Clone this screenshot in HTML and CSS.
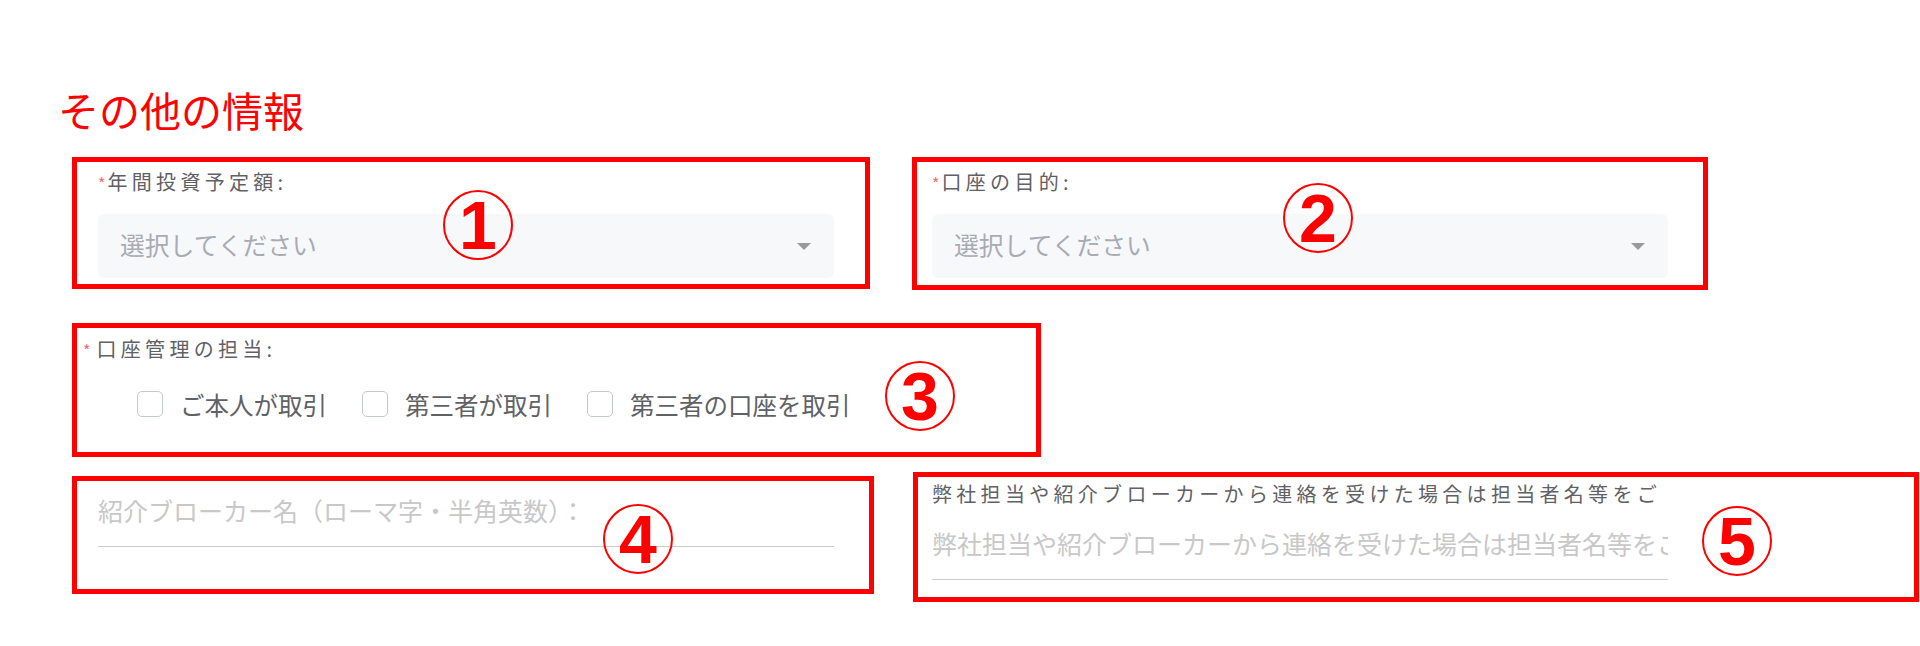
FILE: index.html
```html
<!DOCTYPE html>
<html lang="ja">
<head>
  <meta charset="UTF-8" />
  <title>その他の情報</title>
  <link rel="stylesheet" href="styles.css">
</head>
<body>
  <div class="page">
    <h2 class="section-title">その他の情報</h2>

    <div class="form">
      <!-- 年間投資予定額 -->
      <div class="item">
        <div class="label"><span class="req">*</span>年間投資予定額:</div>
        <div class="select">
          <span class="select-text">選択してください</span>
          <span class="arrow"></span>
        </div>
      </div>

      <!-- 口座の目的 -->
      <div class="item">
        <div class="label"><span class="req">*</span>口座の目的:</div>
        <div class="select">
          <span class="select-text">選択してください</span>
          <span class="arrow"></span>
        </div>
      </div>

      <!-- 口座管理の担当 -->
      <div class="item item-wide">
        <div class="label label-hang"><span class="req req-space">*</span>口座管理の担当:</div>
        <div class="checks">
          <label class="check"><span class="check-box"></span>ご本人が取引</label>
          <label class="check"><span class="check-box"></span>第三者が取引</label>
          <label class="check"><span class="check-box"></span>第三者の口座を取引</label>
        </div>
      </div>

      <!-- 紹介ブローカー名 -->
      <div class="item">
        <div class="line-input line-input-top">
          <span class="input-placeholder">紹介ブローカー名（ローマ字・半角英数）：</span>
        </div>
      </div>

      <!-- 担当者名 -->
      <div class="item">
        <div class="label label-clip">弊社担当や紹介ブローカーから連絡を受けた場合は担当者名等をご記入ください</div>
        <div class="line-input line-input-label">
          <span class="input-placeholder">弊社担当や紹介ブローカーから連絡を受けた場合は担当者名等をご記入ください</span>
        </div>
      </div>
    </div>
  </div>

  <!-- 注釈（赤枠と番号） -->
  <div class="marks">
    <div class="mark-box box-1"></div>
    <div class="mark-box box-2"></div>
    <div class="mark-box box-3"></div>
    <div class="mark-box box-4"></div>
    <div class="mark-box box-5"></div>
    <div class="mark-num num-1">1</div>
    <div class="mark-num num-2">2</div>
    <div class="mark-num num-3">3</div>
    <div class="mark-num num-4">4</div>
    <div class="mark-num num-5">5</div>
  </div>
</body>
</html>
```

FILE: styles.css
```css
/* ページ全体 */
body {
  margin: 0;
  background: #fff;
  font-family: "Noto Sans CJK JP", "Noto Sans", sans-serif;
  position: relative;
  width: 1920px;
  height: 646px;
  overflow: hidden;
}

.page {
  padding: 85px 0 0 58px;
}

.section-title {
  margin: 0 0 39px;
  font-size: 41px;
  line-height: 48px;
  font-weight: 400;
  color: #ff0000;
}

/* フォーム */
.form {
  margin-left: 40px;
  display: grid;
  grid-template-columns: 736px 736px;
  column-gap: 98px;
  row-gap: 61px;
}

.item-wide {
  grid-column: 1 / -1;
}

.label {
  margin-top: -2px;
  font-size: 20px;
  line-height: 24px;
  letter-spacing: 4.3px;
  color: #5f6165;
  white-space: nowrap;
}

.label-hang {
  margin-left: -15px;
}

.label-clip {
  width: 726px;
  overflow: hidden;
}

.req {
  color: #f56c6c;
  font-size: 16px;
  letter-spacing: 0;
  margin-right: 2px;
}

.req-space {
  margin-right: 6px;
}

.select {
  margin-top: 19px;
  height: 64px;
  background: #f7f8fa;
  border-radius: 6px;
  padding: 0 23px 0 22px;
  display: flex;
  align-items: center;
  justify-content: space-between;
  box-sizing: border-box;
}

.select-text {
  margin-bottom: 4px;
  font-size: 24.8px;
  color: #a8abb2;
}

.arrow {
  width: 0;
  height: 0;
  border-left: 7px solid transparent;
  border-right: 7px solid transparent;
  border-top: 7px solid #9a9a9a;
}

/* チェックボックス */
.checks {
  margin: 23px 0 0 39px;
  display: flex;
  gap: 35px;
  height: 38px;
  align-items: center;
}

.check {
  display: flex;
  align-items: center;
  gap: 17px;
  font-size: 24.5px;
  color: #5f6165;
}

.check-box {
  width: 26px;
  height: 26px;
  border: 1px solid #c4c8d0;
  border-radius: 5px;
  box-sizing: border-box;
}

/* 下線入力 */
.line-input {
  padding: 23px 0 21px;
  border-bottom: 1px solid #cccccc;
  line-height: 24px;
  overflow: hidden;
  white-space: nowrap;
}

.line-input-top {
  padding-top: 14px;
  padding-bottom: 20px;
}

.line-input-label {
  padding-top: 25px;
  padding-bottom: 20px;
}

.input-placeholder {
  font-size: 25px;
  color: #c8c8c8;
}

/* 注釈 */
.marks {
  position: absolute;
  inset: 0;
  pointer-events: none;
}

.mark-box {
  position: absolute;
  border: 5px solid #ff0000;
  box-sizing: border-box;
}

.box-1 { left: 72px; top: 157px; width: 798px; height: 132px; }
.box-2 { left: 912px; top: 157px; width: 796px; height: 133px; }
.box-3 { left: 72px; top: 323px; width: 969px; height: 134px; }
.box-4 { left: 72px; top: 476px; width: 802px; height: 118px; }
.box-5 { left: 913px; top: 472px; width: 1006px; height: 130px; }

.mark-num {
  position: absolute;
  width: 70px;
  height: 70px;
  margin: -35px 0 0 -35px;
  border: 2.5px solid #ff0000;
  border-radius: 50%;
  box-sizing: border-box;
  display: flex;
  align-items: center;
  justify-content: center;
  font-family: "Liberation Sans", Arial, sans-serif;
  font-weight: 700;
  font-size: 68px;
  line-height: 1;
  color: #ff0000;
}

.num-1 { left: 478px; top: 225px; }
.num-2 { left: 1318px; top: 218px; }
.num-3 { left: 920px; top: 396px; }
.num-4 { left: 638px; top: 539px; }
.num-5 { left: 1737px; top: 541px; }
```
